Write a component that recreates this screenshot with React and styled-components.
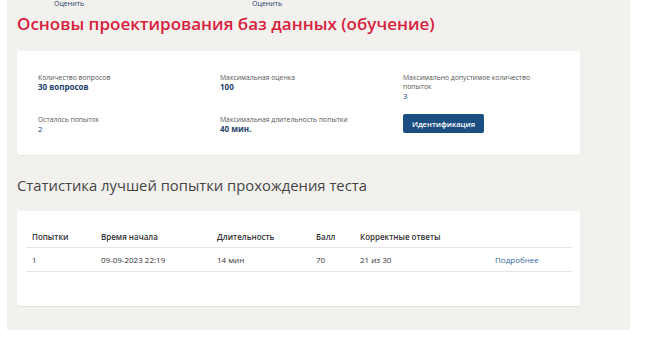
import React from 'react'
import styled, { createGlobalStyle } from 'styled-components'

const GlobalStyle = createGlobalStyle`
  body {
    margin: 0;
    background: #ffffff;
    font-family: 'Open Sans', 'Noto Sans', sans-serif;
  }
`

const colors = {
  page: '#f2f1ee',
  red: '#d8213d',
  navy: '#1d3f6b',
  button: '#1b4f82',
  link: '#3b6aa3',
  text: '#333333',
  muted: '#555555',
  line: '#e4e4e4',
}

const Page = styled.div`
  width: 613px;
  height: 330px;
  margin-left: 7px;
  padding-left: 10px;
  background: ${colors.page};
  box-sizing: content-box;
  overflow: hidden;
`

const RateBar = styled.div`
  display: flex;
  height: 8px;
  padding-left: 37px;
  gap: 168px;
`

const RateLink = styled.span`
  font-size: 7px;
  line-height: 7px;
  color: ${colors.navy};
`

const Title = styled.h1`
  margin: 4px 0 0;
  font-size: 17px;
  line-height: 24px;
  font-weight: 600;
  color: ${colors.red};
`

const Card = styled.div`
  width: 563px;
  height: ${({ $h }) => $h}px;
  margin-top: ${({ $top }) => $top}px;
  padding: ${({ $pad }) => $pad};
  background: #ffffff;
  border-radius: 3px;
  box-shadow: 0 1px 1px rgba(0, 0, 0, 0.06);
  box-sizing: border-box;
`

const InfoGrid = styled.div`
  display: grid;
  grid-template-columns: 182px 183px 1fr;
  grid-template-rows: 42px auto;
`

const Field = styled.div`
  display: flex;
  flex-direction: column;
`

const Label = styled.span`
  font-size: 6.8px;
  line-height: 9px;
  color: ${colors.muted};
  max-width: 132px;
`

const Value = styled.span`
  font-size: 8px;
  line-height: 9px;
  font-weight: ${({ $plain }) => ($plain ? 400 : 700)};
  color: ${colors.navy};
`

const Button = styled.button`
  align-self: flex-start;
  width: 81px;
  height: 19px;
  margin-top: -1px;
  padding: 0;
  border: none;
  border-radius: 2px;
  background: ${colors.button};
  color: #ffffff;
  font-family: inherit;
  font-size: 7.6px;
  font-weight: 600;
`

const SectionTitle = styled.h2`
  margin: 20px 0 0;
  font-size: 14.8px;
  line-height: 20px;
  font-weight: 400;
  color: #454545;
`

const Table = styled.table`
  width: 546px;
  border-collapse: collapse;
  font-size: 8px;
  color: ${colors.text};
`

const Th = styled.th`
  text-align: left;
  font-weight: 600;
  padding: 4px 0 5px ${({ $pl }) => $pl || 0}px;
  width: ${({ $w }) => ($w ? `${$w}px` : 'auto')};
  border-bottom: 1px solid ${colors.line};
`

const Td = styled.td`
  padding: 6px 0 6px ${({ $pl }) => $pl || 0}px;
  border-bottom: 1px solid ${colors.line};
  color: ${({ $link }) => ($link ? colors.link : colors.text)};
`

const info = [
  { label: 'Количество вопросов', value: '30 вопросов' },
  { label: 'Максимальная оценка', value: '100' },
  { label: 'Максимально допустимое количество попыток', value: '3', plain: true },
  { label: 'Осталось попыток', value: '2', plain: true },
  { label: 'Максимальная длительность попытки', value: '40 мин.' },
]

const App = () => (
  <>
    <GlobalStyle />
    <Page>
      <RateBar>
        <RateLink>Оценить</RateLink>
        <RateLink>Оценить</RateLink>
      </RateBar>
      <Title>Основы проектирования баз данных (обучение)</Title>
      <Card $top={15} $h={104} $pad="22px 0 0 21px">
        <InfoGrid>
          {info.map((f) => (
            <Field key={f.label}>
              <Label>{f.label}</Label>
              <Value $plain={f.plain}>{f.value}</Value>
            </Field>
          ))}
          <Button>Идентификация</Button>
        </InfoGrid>
      </Card>
      <SectionTitle>Статистика лучшей попытки прохождения теста</SectionTitle>
      <Card $top={16} $h={95} $pad="16px 0 0 9px">
        <Table>
          <thead>
            <tr>
              <Th $pl={6} $w={69}>Попытки</Th>
              <Th $w={116}>Время начала</Th>
              <Th $w={99}>Длительность</Th>
              <Th $w={44}>Балл</Th>
              <Th $w={135}>Корректные ответы</Th>
              <Th />
            </tr>
          </thead>
          <tbody>
            <tr>
              <Td $pl={6}>1</Td>
              <Td>09-09-2023 22:19</Td>
              <Td>14 мин</Td>
              <Td>70</Td>
              <Td>21 из 30</Td>
              <Td $link>Подробнее</Td>
            </tr>
          </tbody>
        </Table>
      </Card>
    </Page>
  </>
)

export default App
